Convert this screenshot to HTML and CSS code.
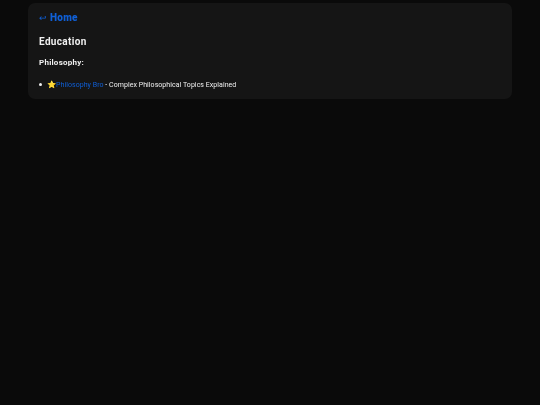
FILE: index.html
```html
<!DOCTYPE html>
<html>
<head>
  <meta charset="utf-8">
  <title>Education</title>
  <link rel="stylesheet" href="styles.css">
</head>
<body>
  <main class="container">
    <a class="home-link" href="#"><span class="arrow">↩</span> Home</a>
    <h1>Education</h1>
    <h2>Philosophy:</h2>
    <ul>
      <li><span class="star">⭐</span><a href="#">Philosophy Bro</a> - Complex Philosophical Topics Explained</li>
    </ul>
  </main>
</body>
</html>
```
FILE: styles.css
```css
body {
  margin: 0;
  min-height: 405px;
  background-color: #0a0a0a;
  color: #f0f0f0;
  font-family: Roboto, "Liberation Sans", sans-serif;
}

.container {
  width: 462px;
  margin: 3px auto 0;
  padding: 8px 11px 8px;
  background-color: #151515;
  border-radius: 7px;
  will-change: transform;
}

a {
  color: #0f5fd6;
  text-decoration: none;
}

.home-link {
  display: block;
  font-size: 10px;
  line-height: 13px;
  font-weight: 900;
  letter-spacing: 0.25px;
}

.arrow {
  font-size: 9px;
  font-weight: 400;
}

h1 {
  margin: 10px 0 0;
  font-size: 10px;
  line-height: 13px;
  font-weight: 700;
  letter-spacing: 0.35px;
}

h2 {
  margin: 9px 0 0;
  font-size: 8px;
  line-height: 11px;
  font-weight: 700;
  letter-spacing: 0.25px;
}

ul {
  margin: 11px 0 0;
  padding: 0;
  list-style: none;
  font-size: 7px;
  line-height: 11px;
  letter-spacing: 0.05px;
}

li::before {
  content: "";
  display: inline-block;
  width: 3px;
  height: 3px;
  margin: 0 4px 1px 0;
  border-radius: 50%;
  background-color: #f0f0f0;
  vertical-align: middle;
}

.star {
  font-size: 7.5px;
  margin-left: 1px;
}
```
